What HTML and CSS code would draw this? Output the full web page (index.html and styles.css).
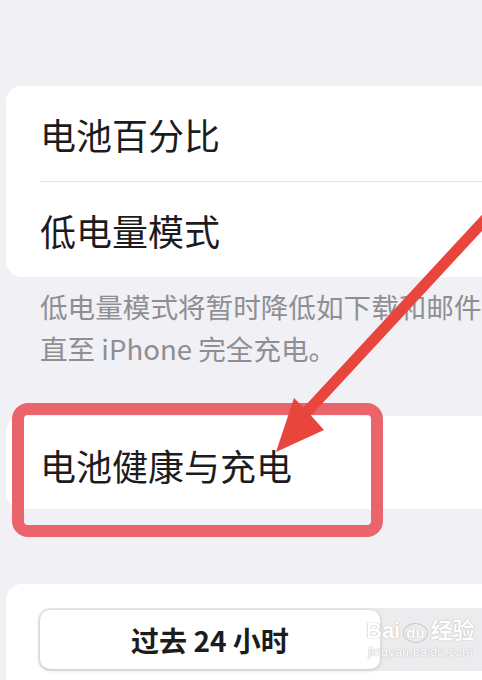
FILE: index.html
```html
<!DOCTYPE html>
<html lang="zh">

<head>
    <meta charset="UTF-8">
    <meta name="viewport" content="width=device-width, initial-scale=1.0">
    <title>电池</title>
    <link rel="stylesheet" href="styles.css">
</head>

<body>

    <div class="screen">

        <!-- Group one -->
        <div class="card">
            <div class="row">电池百分比</div>
            <div class="divider"></div>
            <div class="row">低电量模式</div>
        </div>
        <p class="footnote">低电量模式将暂时降低如下载和邮件<br>直至 iPhone 完全充电。</p>

        <!-- Group two -->
        <div class="card card-health">
            <div class="row">电池健康与充电</div>
        </div>

        <!-- Group three -->
        <div class="card card-usage">
            <div class="segments">
                <div class="segment active">过去 24 小时</div>
                <div class="segment"></div>
            </div>
        </div>

        <!-- annotation -->
        <div class="highlight"></div>
        <svg class="arrow" width="482" height="680" viewBox="0 0 482 680">
            <line x1="492" y1="212" x2="305" y2="414" stroke="#e8453d" stroke-width="11" stroke-linecap="round" />
            <polygon points="276,452 294,398 306,410 324,430" fill="#e8453d" />
        </svg>

        <div class="watermark">
            <div class="wm-logo">Bai<span class="wm-du">du</span>经验</div>
            <div class="wm-url">jingyan.baidu.com</div>
        </div>
    </div>

</body>

</html>
```

FILE: styles.css
```css
/* Basic Reset */
body,
p {
    margin: 0;
    padding: 0;
}

body {
    background-color: #f0f0f5;
    font-family: "Noto Sans CJK SC", "Noto Sans", sans-serif;
    color: #1c1c1e;
    overflow: hidden;
}

.screen {
    position: relative;
    width: 482px;
    height: 680px;
    padding: 86px 0 0 6px;
    box-sizing: border-box;
    overflow: hidden;
}

.card {
    background-color: #fff;
    border-radius: 16px;
    width: 520px;
}

.row {
    display: flex;
    align-items: center;
    height: 95px;
    padding-left: 34px;
    font-size: 36px;
    line-height: 1;
}

.divider {
    height: 1px;
    margin-left: 34px;
    background-color: #e2e2e6;
}

.footnote {
    padding: 8px 0 0 34px;
    font-size: 27.6px;
    line-height: 42px;
    color: #8e8e93;
    white-space: nowrap;
}

.card-health {
    margin-top: 47px;
}

.card-health .row {
    height: 93px;
    padding-top: 4px;
    box-sizing: border-box;
}

.card-usage {
    margin-top: 75px;
    padding: 24px 0 30px 32px;
}

.segments {
    display: flex;
    background-color: #ececee;
    border-radius: 12px;
    padding: 2px;
    height: 59px;
}

.segment {
    flex-shrink: 0;
    width: 340px;
    display: flex;
    align-items: center;
    justify-content: center;
    font-size: 28px;
    font-weight: 600;
}

.segment.active {
    background-color: #fff;
    border-radius: 10px;
    box-shadow: 0 1px 4px rgba(0, 0, 0, 0.18);
    color: #1c1c1e;
}

.highlight {
    position: absolute;
    left: 12px;
    top: 403px;
    width: 371px;
    height: 134px;
    box-sizing: border-box;
    border: 12px solid #ec646b;
    border-radius: 16px;
}

.arrow {
    position: absolute;
    left: 0;
    top: 0;
}

.watermark {
    position: absolute;
    left: 366px;
    top: 618px;
    color: #fff;
    text-shadow: 0 0 1px #b8b8b8, 0 0 1px #b8b8b8;
    text-align: center;
}

.wm-logo {
    font-family: "Liberation Sans", "Noto Sans CJK SC", sans-serif;
    font-size: 22px;
    font-weight: bold;
    line-height: 26px;
    white-space: nowrap;
}

.wm-du {
    display: inline-block;
    font-size: 15px;
    border: 1px solid #c8c8c8;
    border-radius: 50%;
    padding: 0 2px;
    margin: 0 3px;
    line-height: 18px;
}

.wm-url {
    font-family: "Liberation Sans", sans-serif;
    font-size: 13px;
    line-height: 16px;
}
```
